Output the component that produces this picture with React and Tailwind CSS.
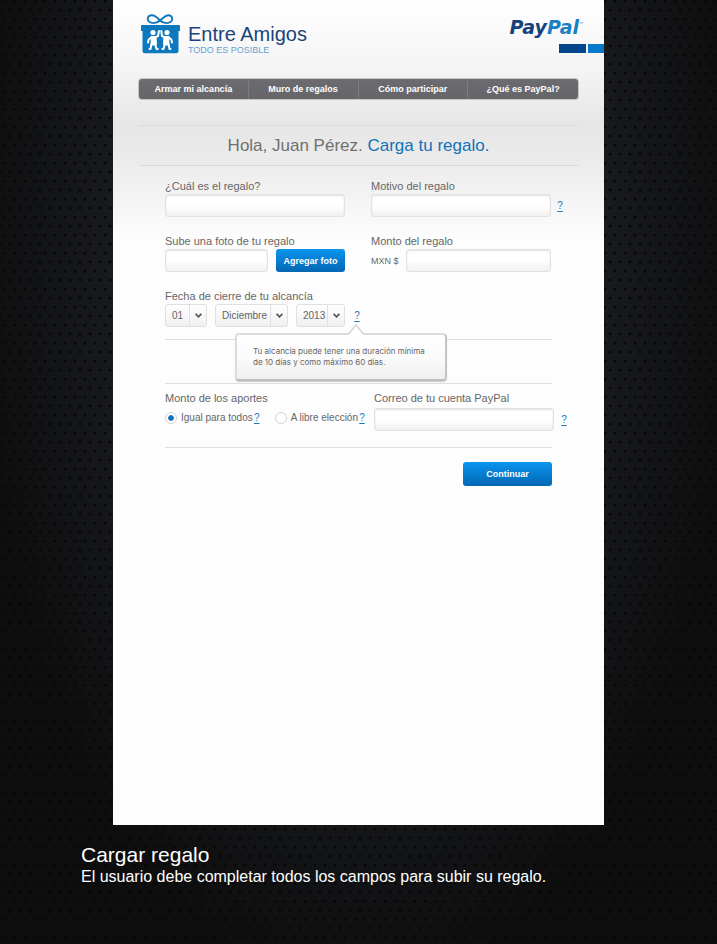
import React, { useState } from 'react';

const navItems = ['Armar mi alcancía', 'Muro de regalos', 'Cómo participar', '¿Qué es PayPal?'];

const inputStyle =
  'block h-[23px] min-w-0 rounded-[3px] border border-[#e2e2e2] bg-linear-to-b from-white via-white to-[#f1f1f1] px-2 text-[10px] text-[#666] shadow-[inset_0_1px_2px_#e2e2e2] outline-none';

const buttonStyle =
  'cursor-pointer rounded-[3px] bg-linear-to-b from-[#0b95ee] to-[#0367b4] text-[9px] font-bold text-white';

const GiftLogo = () => (
  <svg className="h-10 w-10" viewBox="0 0 40 40" fill="none">
    <path
      stroke="#0c78bd"
      strokeWidth="1.9"
      d="M20 6.500C16.500 2.500 13.500 1 11 1.300C7.300 1.800 6.800 6.300 9.500 8C12.500 9.800 17 9 20 6.500C23 4 26 1 29 1.300C32.700 1.800 33.200 6.300 30.500 8C27.500 9.800 23 9 20 6.500z"
    />
    <path fill="#0c78bd" d="M2 11h37a1 1 0 0 1 1 1v5h-1.500v20a2.200 2.200 0 0 1-2.200 2.200H4.700A2.200 2.200 0 0 1 2.500 37V17H1v-5a1 1 0 0 1 1-1z" />
    <g fill="#fff">
      <circle cx="13" cy="18.500" r="2.600" />
      <circle cx="27" cy="18.500" r="2.600" />
      <path d="M11 22h5.500l.5 8-1 1.500h-5.500z" />
      <path d="M23.500 22h5.500l.5 9.500H24l-1-1.500z" />
    </g>
    <g stroke="#fff" strokeWidth="2" strokeLinecap="round" strokeLinejoin="round">
      <path d="M15 23.500L18 22L19 17M11.500 23L8.500 26L8 28.500M11.500 30L10.500 35H9.500M15 29.500L16.500 35H17.800" />
      <path d="M25 23.500L22 22L21.300 17M28.500 23L31.500 26L32 28.500M28.500 30L29.500 35H30.500M25 29.500L23.500 35H22.300" />
    </g>
  </svg>
);

const Help = () => (
  <a href="#ayuda" aria-label="Ayuda" className="w-2 shrink-0 text-center text-[10px] leading-3 text-[#1b7abf] underline underline-offset-2">
    ?
  </a>
);

const DateSelect = ({ label, options, className }) => (
  <div className={`relative ${className}`}>
    <select
      aria-label={label}
      className="block h-[23px] w-full appearance-none rounded-[3px] border border-[#e0e0e0] bg-linear-to-b from-white to-[#f0f0f0] pl-[6px] text-[10px] text-[#666] outline-none"
    >
      {options.map(option => (
        <option key={option}>{option}</option>
      ))}
    </select>
    <span className="pointer-events-none absolute inset-y-px right-0 flex w-[18px] items-center justify-center border-l border-[#e0e0e0]">
      <svg className="h-[5px] w-[7px]" viewBox="0 0 7 5" fill="none" stroke="#555" strokeWidth="1.700">
        <path d="M.6 .8L3.500 3.800L6.400 .8" />
      </svg>
    </span>
  </div>
);

const Tooltip = () => (
  <div className="absolute top-[29px] left-[70px] w-[212px] rounded-[4px] border-2 border-[#dcdcdc] border-r-[#c4c4c4] border-b-[#bdbdbd] bg-linear-to-b from-white via-[#fbfbfb] to-[#efefef] px-4 pt-[11px] pb-[11px] text-[8px] leading-[11px] text-[#666] shadow-[0_1px_1px_#ccc]">
    <svg className="absolute -top-[11px] left-[110px] h-[12px] w-[18px]" viewBox="0 0 18 12">
      <path d="M0 11L9 1L18 11V12H0z" fill="#fff" />
      <path d="M0 10H1.500L9 1L16.500 10H18" fill="none" stroke="#d6d6d6" strokeWidth="1.600" />
    </svg>
    <p className="font-[Inter,sans-serif] whitespace-nowrap">
      Tu alcancía puede tener una duración mínima
      <br />
      de 10 días y como máximo 60 días.
    </p>
  </div>
);

const Radio = ({ id, checked, onChange, children }) => (
  <div className="flex items-center">
    <input
      type="radio"
      id={id}
      name="aportes"
      checked={checked}
      onChange={onChange}
      className="h-3 w-3 shrink-0 appearance-none rounded-full border border-[#d2d2d2] bg-white checked:bg-radial checked:from-[#0f75bc] checked:from-35% checked:to-white checked:to-45%"
    />
    <label htmlFor={id} className="pl-1 text-[10px] leading-4 whitespace-nowrap">
      {children}
    </label>
    <Help />
  </div>
);

const App = () => {
  const [aporte, setAporte] = useState('igual');

  return (
    <div className="min-h-screen bg-[#0d0e0f] bg-[radial-gradient(circle_at_5px_1px,#08080a_1px,transparent_2px),radial-gradient(circle_at_0px_10px,#08080a_1px,transparent_2px),radial-gradient(circle_at_10px_10px,#08080a_1px,transparent_2px),radial-gradient(ellipse_at_50%_25%,#1b1e20_40%,#0e0e0f_75%)] bg-size-[10px_18px,10px_18px,10px_18px,100%_100%] font-['Liberation_Sans',Arial,sans-serif]">
      <main className="mx-[113px] min-h-[825px] bg-[#fdfdfd] bg-[linear-gradient(to_bottom,#fff_0px,#f4f4f4_70px,#e6e6e6_125px,#ebebeb_160px,#fdfdfd_240px)] text-[#666]">
        <header className="flex items-start justify-between pt-[14px] pl-[27px]">
          <div className="flex gap-2">
            <GiftLogo />
            <div className="pt-[9px]">
              <h1 className="text-[20px] leading-[22px] text-[#1c4379]">Entre Amigos</h1>
              <p className="text-[9px] leading-[10px] text-[#64a1d0]">TODO ES POSIBLE</p>
            </div>
          </div>
          <div className="flex flex-col items-end">
            <p className="mr-5 flex font-['DejaVu_Sans',sans-serif] text-[19px] leading-[27px] font-bold text-[#14427e] italic">
              Pay<span className="text-[#1a80c4]">Pal</span>
              <span className="pt-1 text-[5px] leading-3 font-normal not-italic text-[#1a80c4]">™</span>
            </p>
            <div className="mt-[3px] flex gap-0.5">
              <span className="h-[9px] w-[27px] bg-[#04468b]" />
              <span className="h-[9px] w-4 bg-[#0679ca]" />
            </div>
          </div>
        </header>

        <nav className="mx-[26px] mt-6 grid grid-cols-4 rounded-[3px] bg-linear-to-b from-[#6b6b70] to-[#66666a] shadow-[0_0_0_1px_#8886]">
          {navItems.map(item => (
            <a
              key={item}
              href="#menu"
              className="border-r border-[#7c7c80] text-center text-[9px] leading-5 font-bold whitespace-nowrap text-white last:border-r-0"
            >
              {item}
            </a>
          ))}
        </nav>

        <h2 className="mx-[26px] mt-[26px] border-y border-[#dadada] text-center text-[17px] leading-[39px] text-[#707070]">
          Hola, Juan Pérez. <span className="text-[#1272b8]">Carga tu regalo.</span>
        </h2>

        <form className="pt-3 pr-9 pl-[52px] text-[11px] leading-4" onSubmit={e => e.preventDefault()}>
          <div className="grid grid-cols-[minmax(0,180fr)_minmax(0,197fr)] gap-x-[26px] gap-y-4">
            <div>
              <label htmlFor="regalo" className="block">¿Cuál es el regalo?</label>
              <input id="regalo" type="text" className={`${inputStyle} w-full`} />
            </div>
            <div>
              <label htmlFor="motivo" className="block">Motivo del regalo</label>
              <div className="flex items-center gap-[5px] pr-1">
                <input id="motivo" type="text" className={`${inputStyle} flex-1`} />
                <Help />
              </div>
            </div>
            <div>
              <label htmlFor="foto" className="block">Sube una foto de tu regalo</label>
              <div className="flex gap-2">
                <input id="foto" type="text" className={`${inputStyle} flex-1`} />
                <button type="button" className={`${buttonStyle} h-[23px] w-[69px]`}>Agregar foto</button>
              </div>
            </div>
            <div>
              <label htmlFor="monto" className="block">Monto del regalo</label>
              <div className="flex items-center gap-[7px] pr-[17px]">
                <span className="text-[9px]">MXN $</span>
                <input id="monto" type="text" className={`${inputStyle} flex-1`} />
              </div>
            </div>
            <fieldset className="relative col-span-2">
              <legend className="block">Fecha de cierre de tu alcancía</legend>
              <div className="flex items-center gap-2">
                <DateSelect label="Día" options={['01', '02', '03']} className="w-[42px]" />
                <DateSelect label="Mes" options={['Diciembre', 'Noviembre']} className="w-[73px]" />
                <DateSelect label="Año" options={['2013', '2014']} className="w-[49px]" />
                <Help />
              </div>
              <Tooltip />
            </fieldset>
          </div>

          <div className="mt-3 mr-4 h-[45px] border-y border-[#dedede]" />

          <div className="grid grid-cols-[minmax(0,209fr)_minmax(0,194fr)] pt-[6px]">
            <fieldset>
              <legend className="block">Monto de los aportes</legend>
              <div className="flex gap-[14px] pt-1">
                <Radio id="igual" checked={aporte === 'igual'} onChange={() => setAporte('igual')}>
                  Igual para todos
                </Radio>
                <Radio id="libre" checked={aporte === 'libre'} onChange={() => setAporte('libre')}>
                  A libre elección
                </Radio>
              </div>
            </fieldset>
            <div>
              <label htmlFor="correo" className="block">Correo de tu cuenta PayPal</label>
              <div className="mt-0.5 flex items-center gap-[6px]">
                <input id="correo" type="email" className={`${inputStyle} flex-1`} />
                <Help />
              </div>
            </div>
          </div>

          <div className="mt-4 mr-4 flex justify-end border-t border-[#dedede] pt-[14px]">
            <button type="submit" className={`${buttonStyle} h-6 w-[89px]`}>Continuar</button>
          </div>
        </form>
      </main>

      <footer className="px-[81px] pt-[18px] text-white">
        <h3 className="text-[21px] leading-6">Cargar regalo</h3>
        <p className="text-[16px] leading-5">El usuario debe completar todos los campos para subir su regalo.</p>
      </footer>
    </div>
  );
};

export default App;
